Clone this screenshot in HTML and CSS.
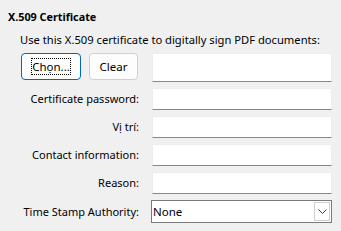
FILE: index.html
```html
<!DOCTYPE html>
<html>
<head>
<meta charset="utf-8">
<link rel="stylesheet" href="styles.css">
</head>
<body>
<div class="panel">
  <div class="title">X.509 Certificate</div>
  <div class="intro">Use this X.509 certificate to digitally sign PDF documents:</div>
  <div class="form">
    <div class="buttons">
      <button class="btn btn-primary"><span class="focus">Chọn...</span></button>
      <button class="btn">Clear</button>
    </div>
    <div class="field field-tall"></div>

    <div class="label">Certificate password:</div>
    <div class="field"></div>

    <div class="label">Vị trí:</div>
    <div class="field"></div>

    <div class="label">Contact information:</div>
    <div class="field"></div>

    <div class="label">Reason:</div>
    <div class="field"></div>

    <div class="label">Time Stamp Authority:</div>
    <div class="combo">
      <span class="combo-text">None</span>
      <span class="combo-btn">
        <svg width="9" height="5" viewBox="0 0 9 5"><path d="M0.5 0.5 L4.5 4.5 L8.5 0.5" fill="none" stroke="#444" stroke-width="1"/></svg>
      </span>
    </div>
  </div>
</div>
</body>
</html>
```

FILE: styles.css
```css
html, body {
  margin: 0;
  padding: 0;
  background: #f0f0f0;
}
body {
  width: 341px;
  height: 231px;
  overflow: hidden;
  font-family: "Noto Sans", "Open Sans", sans-serif;
  font-size: 11px;
  color: #000;
}
.panel {
  padding: 9px 0 0 8px;
}
.title {
  font-weight: bold;
  font-size: 10.8px;
  height: 16px;
  line-height: 16px;
  white-space: nowrap;
}
.intro {
  margin-top: 7px;
  margin-left: 12px;
  height: 16px;
  line-height: 16px;
  white-space: nowrap;
  font-size: 11.2px;
}
.form {
  margin-top: 5px;
  margin-left: 13px;
  display: grid;
  grid-template-columns: 118px 180px;
  column-gap: 13px;
  row-gap: 6px;
  align-items: center;
}
.buttons {
  display: flex;
  gap: 8px;
  align-self: start;
}
.btn {
  height: 27px;
  box-sizing: border-box;
  border: 1px solid #d0d0d0;
  border-radius: 4px;
  background: #fdfdfd;
  font: inherit;
  font-size: 11.5px;
  padding: 0;
  width: 49px;
  color: #000;
}
.btn-primary {
  width: 60px;
  border-color: #0067c0;
  display: flex;
  align-items: center;
  justify-content: center;
}
.focus {
  border: 1px dotted #000;
  padding: 0;
  height: 15px;
  line-height: 15px;
  width: 38px;
  display: block;
  white-space: nowrap;
  text-align: center;
}
.label {
  text-align: right;
  line-height: 16px;
  white-space: nowrap;
}
.field {
  height: 22px;
  box-sizing: border-box;
  background: #fff;
  border: 1px solid #ececec;
  border-bottom: 1px solid #868686;
}
.field-tall {
  height: 29px;
}
.combo {
  height: 23px;
  box-sizing: border-box;
  background: #fff;
  border: 1px solid #7a7a7a;
  display: flex;
  align-items: center;
  margin-left: -1px;
}
.combo-text {
  flex: 1;
  padding-left: 1px;
  line-height: 16px;
  font-size: 11.5px;
}
.combo-btn {
  width: 16px;
  height: 19px;
  box-sizing: border-box;
  border: 1px solid #d0d0d0;
  margin-right: 1px;
  display: flex;
  align-items: center;
  justify-content: center;
}
```
